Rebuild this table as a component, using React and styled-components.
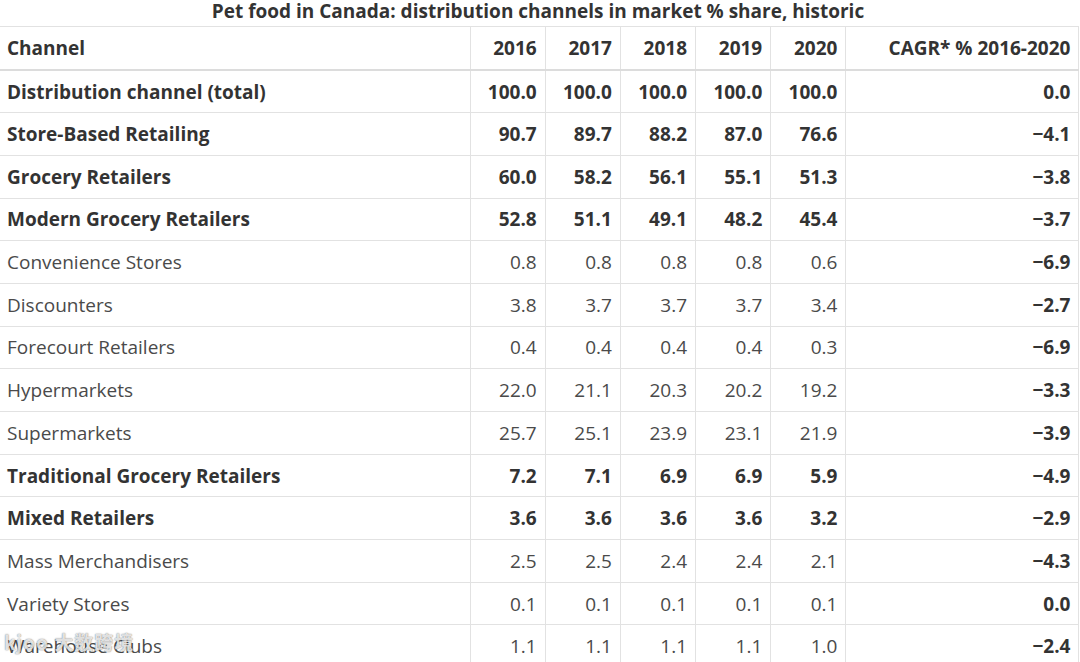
import React from "react";
import styled, { createGlobalStyle } from "styled-components";

const GlobalStyle = createGlobalStyle`
  html, body {
    margin: 0;
    padding: 0;
    background: #fff;
    overflow: hidden;
  }
  body {
    font-family: "Open Sans", "Noto Sans", sans-serif;
    color: #333;
  }
`;

const Page = styled.div`
  position: relative;
  width: 1080px;
  height: 662px;
  overflow: hidden;
`;

const Title = styled.div`
  height: 26px;
  line-height: 23px;
  text-align: center;
  font-size: 19px;
  font-weight: 700;
  color: #333;
  padding-right: 4px;
`;

const Table = styled.table`
  width: 1080px;
  border-collapse: collapse;
  table-layout: fixed;
  font-size: 19px;
`;

const HeadCell = styled.th`
  height: 42px;
  padding: 0 8px 0 7px;
  font-weight: 700;
  color: #333;
  text-align: ${(p) => (p.$left ? "left" : "right")};
  border-top: 1px solid #e2e2e2;
  border-bottom: 2px solid #dcdcdc;
  border-left: ${(p) => (p.$left ? "none" : "1px solid #e2e2e2")};
  border-right: ${(p) => (p.$last ? "1px solid #e2e2e2" : "none")};
  white-space: nowrap;
`;

const Row = styled.tr`
  height: 42.7px;
`;

const Cell = styled.td`
  padding: 0 8px 0 7px;
  font-weight: ${(p) => (p.$bold ? 700 : 400)};
  color: ${(p) => (p.$bold ? "#333" : "#4a4a4a")};
  text-align: ${(p) => (p.$left ? "left" : "right")};
  border-bottom: 1px solid #e2e2e2;
  border-left: ${(p) => (p.$left ? "none" : "1px solid #e2e2e2")};
  border-right: ${(p) => (p.$last ? "1px solid #e2e2e2" : "none")};
  white-space: nowrap;
`;

const Watermark = styled.div`
  position: absolute;
  left: 4px;
  bottom: 10px;
  font-family: "Noto Sans CJK SC", "Open Sans", sans-serif;
  font-size: 19px;
  line-height: 20px;
  font-weight: 700;
  color: rgba(255, 255, 255, 0.8);
  text-shadow: 0 0 1px rgba(0, 0, 0, 0.45), 0 0 2px rgba(0, 0, 0, 0.25);
  letter-spacing: 1px;
  pointer-events: none;
`;

const years = ["2016", "2017", "2018", "2019", "2020"];

const rows = [
  ["Distribution channel (total)", true, ["100.0", "100.0", "100.0", "100.0", "100.0"], "0.0"],
  ["Store-Based Retailing", true, ["90.7", "89.7", "88.2", "87.0", "76.6"], "−4.1"],
  ["Grocery Retailers", true, ["60.0", "58.2", "56.1", "55.1", "51.3"], "−3.8"],
  ["Modern Grocery Retailers", true, ["52.8", "51.1", "49.1", "48.2", "45.4"], "−3.7"],
  ["Convenience Stores", false, ["0.8", "0.8", "0.8", "0.8", "0.6"], "−6.9"],
  ["Discounters", false, ["3.8", "3.7", "3.7", "3.7", "3.4"], "−2.7"],
  ["Forecourt Retailers", false, ["0.4", "0.4", "0.4", "0.4", "0.3"], "−6.9"],
  ["Hypermarkets", false, ["22.0", "21.1", "20.3", "20.2", "19.2"], "−3.3"],
  ["Supermarkets", false, ["25.7", "25.1", "23.9", "23.1", "21.9"], "−3.9"],
  ["Traditional Grocery Retailers", true, ["7.2", "7.1", "6.9", "6.9", "5.9"], "−4.9"],
  ["Mixed Retailers", true, ["3.6", "3.6", "3.6", "3.6", "3.2"], "−2.9"],
  ["Mass Merchandisers", false, ["2.5", "2.5", "2.4", "2.4", "2.1"], "−4.3"],
  ["Variety Stores", false, ["0.1", "0.1", "0.1", "0.1", "0.1"], "0.0"],
  ["Warehouse Clubs", false, ["1.1", "1.1", "1.1", "1.1", "1.0"], "−2.4"],
];

export default function App() {
  return (
    <Page>
      <GlobalStyle />
      <Title>Pet food in Canada: distribution channels in market % share, historic</Title>
      <Table>
        <colgroup>
          <col style={{ width: 470 }} />
          {years.map((y) => (
            <col key={y} style={{ width: 75.2 }} />
          ))}
          <col style={{ width: 233 }} />
          <col />
        </colgroup>
        <thead>
          <tr>
            <HeadCell $left>Channel</HeadCell>
            {years.map((y) => (
              <HeadCell key={y}>{y}</HeadCell>
            ))}
            <HeadCell $last>CAGR* % 2016-2020</HeadCell>
          </tr>
        </thead>
        <tbody>
          {rows.map(([name, bold, vals, cagr]) => (
            <Row key={name}>
              <Cell $left $bold={bold}>{name}</Cell>
              {vals.map((v, i) => (
                <Cell key={i} $bold={bold}>{v}</Cell>
              ))}
              <Cell $bold $last>{cagr}</Cell>
            </Row>
          ))}
        </tbody>
      </Table>
      <Watermark>kjoo 大数跨境</Watermark>
    </Page>
  );
}
